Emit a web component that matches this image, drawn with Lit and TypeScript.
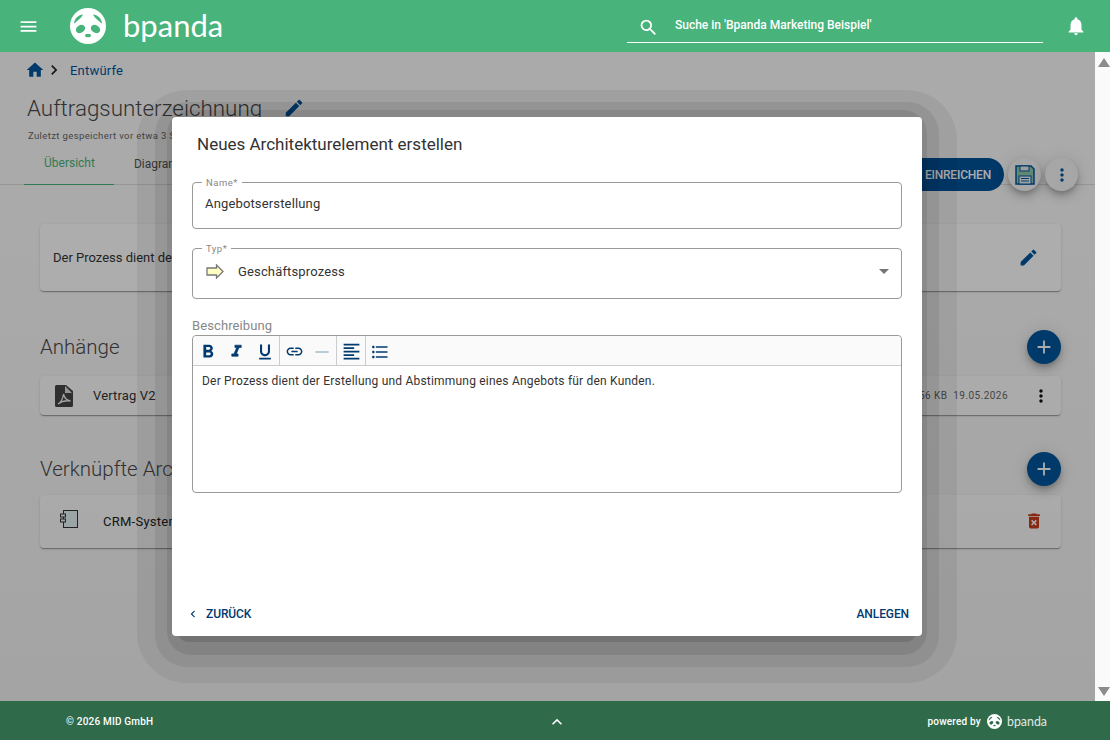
import { LitElement, css, html, svg } from "lit";
import { customElement } from "lit/decorators.js";

const icon = (d: string, size = 24, cls = "") => html`<svg class=${cls} width=${size} height=${size} viewBox="0 0 24 24" fill="currentColor"><path d=${d}></path></svg>`;

const MENU = "M3 18h18v-2H3v2zm0-5h18v-2H3v2zm0-7v2h18V6H3z";
const SEARCH = "M15.5 14h-.79l-.28-.27A6.47 6.47 0 0 0 16 9.5 6.5 6.5 0 1 0 9.5 16c1.61 0 3.09-.59 4.23-1.57l.27.28v.79l5 4.99L20.49 19l-4.99-5zm-6 0C7.01 14 5 11.99 5 9.5S7.01 5 9.5 5 14 7.01 14 9.5 11.99 14 9.5 14z";
const BELL = "M12 22c1.1 0 2-.9 2-2h-4c0 1.1.9 2 2 2zm6-6v-5c0-3.07-1.63-5.64-4.5-6.32V4c0-.83-.67-1.5-1.5-1.5s-1.5.67-1.5 1.5v.68C7.64 5.36 6 7.92 6 11v5l-2 2v1h16v-1l-2-2z";
const HOME = "M10 20v-6h4v6h5v-8h3L12 3 2 12h3v8z";
const CHEVRON = "M10 6 8.59 7.41 13.17 12l-4.58 4.59L10 18l6-6z";
const CHEVRON_L = "M15.41 7.41 14 6l-6 6 6 6 1.41-1.41L10.83 12z";
const UP = "M7.41 15.41 12 10.83l4.59 4.58L18 14l-6-6-6 6z";
const PENCIL = "M3 17.25V21h3.75L17.81 9.94l-3.75-3.75L3 17.25zM20.71 7.04a1 1 0 0 0 0-1.41l-2.34-2.34a1 1 0 0 0-1.41 0l-1.83 1.83 3.75 3.75 1.83-1.83z";
const DOTS = "M12 8c1.1 0 2-.9 2-2s-.9-2-2-2-2 .9-2 2 .9 2 2 2zm0 2c-1.1 0-2 .9-2 2s.9 2 2 2 2-.9 2-2-.9-2-2-2zm0 6c-1.1 0-2 .9-2 2s.9 2 2 2 2-.9 2-2-.9-2-2-2z";
const PLUS = "M19 13h-6v6h-2v-6H5v-2h6V5h2v6h6v2z";
const TRASH = "M6 19c0 1.1.9 2 2 2h8c1.1 0 2-.9 2-2V7H6v12zm2.46-7.12 1.41-1.41L12 12.59l2.12-2.12 1.41 1.41L13.41 14l2.12 2.12-1.41 1.41L12 15.41l-2.12 2.12-1.41-1.41L10.59 14l-2.13-2.12zM15.5 4l-1-1h-5l-1 1H5v2h14V4z";
const BOLD = "M15.6 10.79c.97-.67 1.65-1.77 1.65-2.79 0-2.26-1.75-4-4-4H7v14h7.04c2.09 0 3.71-1.7 3.71-3.79 0-1.52-.86-2.82-2.15-3.42zM10 6.5h3c.83 0 1.5.67 1.5 1.5s-.67 1.5-1.5 1.5h-3v-3zm3.5 9H10v-3h3.5c.83 0 1.5.67 1.5 1.5s-.67 1.5-1.5 1.5z";
const ITALIC = "M10 4v3h2.21l-3.42 8H6v3h8v-3h-2.21l3.42-8H18V4z";
const UNDERLINE = "M12 17c3.31 0 6-2.69 6-6V3h-2.5v8c0 1.93-1.57 3.5-3.5 3.5S8.5 12.93 8.5 11V3H6v8c0 3.31 2.69 6 6 6zm-7 2v2h14v-2H5z";
const LINK = "M3.9 12c0-1.71 1.39-3.1 3.1-3.1h4V7H7c-2.76 0-5 2.24-5 5s2.24 5 5 5h4v-1.9H7c-1.71 0-3.1-1.39-3.1-3.1zM8 13h8v-2H8v2zm9-6h-4v1.9h4c1.71 0 3.1 1.39 3.1 3.1s-1.39 3.1-3.1 3.1h-4V17h4c2.76 0 5-2.24 5-5s-2.24-5-5-5z";
const RULE = "M4 11h16v2H4z";
const ALIGN = "M15 15H3v2h12v-2zm0-8H3v2h12V7zM3 13h18v-2H3v2zm0 8h18v-2H3v2zM3 3v2h18V3H3z";
const LIST = "M4 10.5c-.83 0-1.5.67-1.5 1.5s.67 1.5 1.5 1.5 1.5-.67 1.5-1.5-.67-1.5-1.5-1.5zm0-6c-.83 0-1.5.67-1.5 1.5S3.17 7.5 4 7.5 5.5 6.83 5.5 6 4.83 4.5 4 4.5zm0 12c-.83 0-1.5.68-1.5 1.5s.68 1.5 1.5 1.5 1.5-.68 1.5-1.5-.67-1.5-1.5-1.5zM7 19h14v-2H7v2zm0-6h14v-2H7v2zm0-8v2h14V5H7z";

// the reference's dialog shadow shows as hard bands: [top, side, bottom, radius, alpha]
const SHADOW_BANDS = [
  [27, 35, 47, 50, 0.055],
  [15, 17, 31, 32, 0.07],
  [7, 5, 19, 24, 0.087],
  [-20, -6, 6, 10, 0.118],
];

const panda = (size: number, hole: string) => html`
  <svg width=${size} height=${size} viewBox="0 0 36 36">
    <circle cx="18" cy="18" r="18" fill="#fff"></circle>
    ${svg`
      <path d="M4 15.500C4 11 8.500 6.500 13 6.500 12 9 7 13.500 4 15.500z" fill=${hole}></path>
      <path d="M32 15.500C32 11 27.500 6.500 23 6.500 24 9 29 13.500 32 15.500z" fill=${hole}></path>
      <ellipse cx="10.500" cy="21" rx="5" ry="3.800" transform="rotate(-35 10.500 21)" fill=${hole}></ellipse>
      <ellipse cx="25.500" cy="21" rx="5" ry="3.800" transform="rotate(35 25.500 21)" fill=${hole}></ellipse>
      <ellipse cx="18" cy="27.500" rx="3" ry="1.800" fill=${hole}></ellipse>
    `}
  </svg>`;

@customElement("app-root")
export class AppRoot extends LitElement {
  static styles = css`
    :host {
      display: flex;
      flex-direction: column;
      height: 740px;
      overflow: hidden;
      font-family: Roboto, "Liberation Sans", sans-serif;
      color: #333;
      background: #fafafa;
    }
    svg { display: block; flex: none; }

    .topbar {
      height: 52px;
      flex: none;
      background: #48b37b;
      color: #fff;
      display: flex;
      align-items: center;
      padding: 0 23px 0 18px;
    }
    .logo { display: flex; align-items: center; gap: 17px; margin-left: 31px; }
    .wordmark { font-family: Lato, sans-serif; font-size: 31px; line-height: 36px; margin-top: -2px; }
    .search {
      margin-left: auto;
      align-self: flex-start;
      width: 416px;
      height: 43px;
      border-bottom: 1px solid #fff;
      display: flex;
      align-items: center;
      font-size: 12px;
      font-weight: 500;
      gap: 16px;
      padding: 8px 0 0 11px;
      box-sizing: border-box;
    }
    .search svg { margin-top: 4px; }
    .bell { margin-left: 22px; }

    .middle { flex: 1; display: flex; min-height: 0; position: relative; }
    .page { flex: 1; min-width: 0; position: relative; overflow: hidden; }
    .scrollbar {
      width: 15px;
      flex: none;
      background: #fafafa;
      display: flex;
      flex-direction: column;
      justify-content: space-between;
      padding: 6px 0 5px 3px;
      box-sizing: border-box;
    }
    .arrow-up { width: 0; border: 6px solid transparent; border-top: 0; border-bottom: 9px solid #8b8b8b; }
    .arrow-down { width: 0; border: 6px solid transparent; border-bottom: 0; border-top: 9px solid #8b8b8b; }

    .crumbs {
      display: flex;
      align-items: center;
      height: 20px;
      padding: 8px 0 0 25px;
      color: #0055a0;
      font-size: 13px;
    }
    .crumbs .sep { color: #222; margin: 0 2px 0 -1px; }
    .crumbs span { margin-left: 4px; letter-spacing: 0.2px; }
    .title-row { display: flex; align-items: center; margin: 12px 0 0 27px; height: 32px; gap: 21px; }
    h1 { margin: 0; font-size: 22.4px; font-weight: 300; color: #4a4a4a; }
    .title-row svg { color: #0055a0; }
    .saved { font-size: 9.5px; letter-spacing: 0.38px; color: #666; margin: 6px 0 0 28px; height: 12px; line-height: 12px; }

    .tabs-row {
      height: 43px;
      border-bottom: 1px solid #ddd;
      display: flex;
      position: relative;
      padding-left: 24px;
      box-sizing: border-box;
    }
    .tab { padding: 0 20px; height: 43px; font-size: 12px; display: flex; align-items: center; box-sizing: border-box; color: #555; }
    .tab.active { color: #48b37b; border-bottom: 1px solid #48b37b; padding-right: 19px; }
    .tab-actions {
      position: absolute;
      right: 17px;
      top: 16px;
      display: flex;
      align-items: center;
      gap: 4px;
      z-index: 1;
    }
    .submit {
      height: 33px;
      border-radius: 17px;
      background: #005299;
      color: #fff;
      font-size: 12px;
      font-weight: 500;
      letter-spacing: -0.2px;
      padding: 0 13px 0 40px;
      display: flex;
      align-items: center;
    }
    .round {
      width: 33px;
      height: 33px;
      border-radius: 50%;
      background: #f5f5f5;
      color: #0055a0;
      display: flex;
      align-items: center;
      justify-content: center;
      box-shadow: 0 3px 5px -1px rgba(0,0,0,.2), 0 6px 10px 0 rgba(0,0,0,.14), 0 1px 18px 0 rgba(0,0,0,.12);
    }

    .content { padding: 39px 34px 0 40px; }
    .card {
      background: #fff;
      border-radius: 4px;
      box-shadow: 0 2px 1px -1px rgba(0,0,0,.2), 0 1px 1px 0 rgba(0,0,0,.14), 0 1px 3px 0 rgba(0,0,0,.12);
      display: flex;
      align-items: center;
      font-size: 13px;
    }
    .desc { height: 67px; padding: 0 22px 0 13px; justify-content: space-between; }
    .desc svg { color: #0055a0; }
    .section-head { display: flex; align-items: center; justify-content: space-between; height: 34px; }
    .section-head h2 { margin: 0; font-size: 20.5px; font-weight: 300; color: #4a4a4a; }
    .fab {
      width: 34px;
      height: 34px;
      border-radius: 50%;
      background: #00569f;
      color: #fff;
      display: flex;
      align-items: center;
      justify-content: center;
      box-shadow: 0 3px 5px -1px rgba(0,0,0,.2), 0 6px 10px 0 rgba(0,0,0,.14), 0 1px 18px 0 rgba(0,0,0,.12);
    }
    .attach { height: 39px; padding-left: 15px; margin-top: 12px; }
    .attach .name { margin-left: 20px; letter-spacing: 0.15px; flex: 1; }
    .attach .meta { font-size: 10px; letter-spacing: 0.45px; color: #666; margin-right: 23px; }
    .attach .menu { margin-right: 10px; color: #111; }
    .linked { height: 53px; padding-left: 20px; margin-top: 9px; }
    .linked .comp { margin-top: -6px; }
    .linked .name { margin-left: 25px; letter-spacing: 0.25px; flex: 1; color: #222; }
    .linked .del { color: #cb3e18; margin: -1px 17px 0 0; }
    .s1 { margin-top: 39px; }
    .s2 { margin-top: 37px; }

    .scrim {
      position: absolute;
      inset: 0;
      background: linear-gradient(rgba(0,0,0,.32) 30%, rgba(0,0,0,.345));
      z-index: 2;
    }
    .dialog-wrap {
      position: absolute;
      left: 172px;
      top: 65px;
      width: 750px;
      height: 519px;
      z-index: 3;
    }
    .band { position: absolute; }
    .dialog {
      position: relative;
      height: 100%;
      background: #fff;
      border-radius: 4px;
      box-sizing: border-box;
      padding: 0 20px;
      display: flex;
      flex-direction: column;
    }
    .dialog h3 { margin: 17px 0 0 5px; font-size: 17px; font-weight: 400; line-height: 20px; color: #333; }
    .field {
      position: relative;
      border: 1px solid #999;
      border-radius: 4px;
      display: flex;
      align-items: center;
      padding: 0 12px;
      font-size: 13px;
      letter-spacing: 0.15px;
      color: #333;
      box-sizing: border-box;
    }
    .field label {
      position: absolute;
      left: 9px;
      top: -6px;
      padding: 0 4px;
      background: #fff;
      font-size: 9.5px;
      line-height: 11px;
      letter-spacing: 0.5px;
      color: #888;
    }
    .name-field { height: 47px; margin-top: 28px; padding-bottom: 5px; }
    .type-field { height: 51px; margin-top: 19px; padding-bottom: 4px; gap: 14px; }
    .type-field .arrow { margin-left: 1px; }
    .type-field .caret { margin-left: auto; width: 0; height: 0; border: 5px solid transparent; border-top-color: #757575; border-bottom: 0; }
    .editor-label { font-size: 13px; color: #888; margin-top: 20px; line-height: 14px; letter-spacing: 0.1px; }
    .editor { height: 158px; margin-top: 2px; border: 1px solid #999; border-radius: 4px; box-sizing: border-box; display: flex; flex-direction: column; }
    .toolbar { height: 30px; flex: none; display: flex; align-items: center; border-bottom: 1px solid #ccc; background: #fafafa; color: #003a70; box-sizing: border-box; border-radius: 4px 4px 0 0; }
    .group { display: flex; height: 100%; align-items: center; border-right: 1px solid #ccc; padding-top: 2px; box-sizing: border-box; }
    .group:first-child { padding-left: 2px; }
    .group:last-child { border-right: 0; }
    .tool { width: 28px; height: 24px; display: flex; align-items: center; justify-content: center; }
    .tool.off { color: #b0c4d4; }
    .tool.bold svg { margin-left: -3px; }
    .tool.heavy svg { margin-left: -2px; }
    .tool.heavy svg path { stroke: currentColor; stroke-width: 0.8px; }
    .editor-body { font-size: 12px; letter-spacing: 0.2px; padding: 8px 9px; color: #333; line-height: 14px; }
    .actions {
      margin: auto -7px 0 -6px;
      height: 44px;
      display: flex;
      justify-content: space-between;
      align-items: center;
      box-sizing: border-box;
      color: #003a70;
      font-size: 12px;
      font-weight: 500;
      letter-spacing: -0.1px;
    }
    .back { display: flex; align-items: center; gap: 6px; }

    .footer {
      height: 39px;
      flex: none;
      background: #2f6b4b;
      color: #fff;
      display: grid;
      grid-template-columns: 1fr auto 1fr;
      align-items: center;
      padding: 2px 63px 0 66px;
      box-sizing: border-box;
      font-size: 10px;
      font-weight: 500;
      letter-spacing: 0.2px;
    }
    .powered { display: flex; align-items: center; justify-content: flex-end; gap: 6px; }
    .powered b { font-family: Lato, sans-serif; font-weight: 400; font-size: 12.4px; opacity: .85; letter-spacing: 0; margin-left: -1px; }
  `;

  render() {
    return html`
      <div class="topbar">
        ${icon(MENU, 21)}
        <div class="logo">${panda(36, "#48b37b")}<span class="wordmark">bpanda</span></div>
        <div class="search">${icon(SEARCH, 21)}<span>Suche in 'Bpanda Marketing Beispiel'</span></div>
        ${icon(BELL, 22, "bell")}
      </div>

      <div class="middle">
        <div class="page">
          <div class="crumbs">
            ${icon(HOME, 20)}
            ${icon(CHEVRON, 20, "sep")}
            <span>Entwürfe</span>
          </div>
          <div class="title-row">
            <h1>Auftragsunterzeichnung</h1>
            ${icon(PENCIL, 22)}
          </div>
          <div class="saved">Zuletzt gespeichert vor etwa 3 Stunden</div>
          <div class="tabs-row">
            <div class="tab active">Übersicht</div>
            <div class="tab">Diagramm</div>
            <div class="tab-actions">
              <div class="submit">EINREICHEN</div>
              <div class="round">
                <svg width="24" height="24" viewBox="0 0 24 24">
                  <path d="M3 3h15l3 3v15H3z" fill="#8fc8a8" stroke="#00559d" stroke-width="1.5"></path>
                  <rect x="7" y="3" width="9" height="5" fill="#e8e8e8" stroke="#00559d"></rect>
                  <rect x="6" y="13" width="12" height="8" fill="#e8f0f4" stroke="#00559d"></rect>
                  <path d="M8 15.500h8M8 18h8" stroke="#00559d"></path>
                </svg>
              </div>
              <div class="round">${icon(DOTS, 20)}</div>
            </div>
          </div>

          <div class="content">
            <div class="card desc">
              <span>Der Prozess dient der Erstellung und Abstimmung eines Angebots für den Kunden.</span>
              ${icon(PENCIL, 21)}
            </div>

            <div class="section-head s1"><h2>Anhänge</h2><div class="fab">${icon(PLUS, 22)}</div></div>
            <div class="card attach">
              <svg width="18" height="22" viewBox="0 0 18 22">
                <path d="M1.500 0H11l7 6v14.500a1.500 1.500 0 0 1-1.500 1.500h-15A1.500 1.500 0 0 1 0 20.500v-19A1.500 1.500 0 0 1 1.500 0z" fill="#454545"></path>
                <path d="M10 1v7h7z" fill="#ddd"></path>
                <path d="M3 19c2.500-1.500 5-6 5.500-10 .8 4 3.500 6.500 7 7-4-.6-9 .3-12.500 3z" fill="none" stroke="#eee" stroke-width="1.3"></path>
              </svg>
              <span class="name">Vertrag V2</span>
              <span class="meta">56 KB&nbsp; 19.05.2026</span>
              ${icon(DOTS, 20, "menu")}
            </div>

            <div class="section-head s2"><h2>Verknüpfte Architekturelemente</h2><div class="fab">${icon(PLUS, 22)}</div></div>
            <div class="card linked">
              <svg class="comp" width="18" height="18" viewBox="0 0 18 18">
                <rect x="3.5" y=".5" width="14" height="17" fill="#eaf8f8" stroke="#333"></rect>
                <rect x=".5" y="4" width="5" height="3" fill="#eaf8f8" stroke="#333"></rect>
                <rect x=".5" y="9" width="5" height="3" fill="#eaf8f8" stroke="#333"></rect>
              </svg>
              <span class="name">CRM-System</span>
              ${icon(TRASH, 20, "del")}
            </div>
          </div>

          <div class="scrim"></div>
          <div class="dialog-wrap">
            ${SHADOW_BANDS.map(([top, side, bottom, radius, alpha]) => html`
              <div class="band" style="inset:${-top}px ${-side}px ${-bottom}px;border-radius:${radius}px;background:rgba(0,0,0,${alpha})"></div>
            `)}
            <div class="dialog">
              <h3>Neues Architekturelement erstellen</h3>
              <div class="field name-field"><label>Name*</label>Angebotserstellung</div>
              <div class="field type-field">
                <label>Typ*</label>
                <svg class="arrow" width="18" height="15" viewBox="0 0 18 15">
                  <path d="M1 4h9.500V1L17 7.500 10.500 14v-3H1z" fill="#ffffc4" stroke="#777" stroke-width="1.300"></path>
                </svg>
                <span>Geschäftsprozess</span>
                <span class="caret"></span>
              </div>
              <div class="editor-label">Beschreibung</div>
              <div class="editor">
                <div class="toolbar">
                  <div class="group">
                    <span class="tool bold">${icon(BOLD, 22)}</span>
                    <span class="tool heavy">${icon(ITALIC, 19)}</span>
                    <span class="tool">${icon(UNDERLINE, 20)}</span>
                  </div>
                  <div class="group">
                    <span class="tool">${icon(LINK, 19)}</span>
                    <span class="tool off">${icon(RULE, 20)}</span>
                  </div>
                  <div class="group">
                    <span class="tool">${icon(ALIGN, 21)}</span>
                  </div>
                  <div class="group">
                    <span class="tool">${icon(LIST, 20)}</span>
                  </div>
                </div>
                <div class="editor-body">Der Prozess dient der Erstellung und Abstimmung eines Angebots für den Kunden.</div>
              </div>
              <div class="actions">
                <span class="back">${icon(CHEVRON_L, 14)}ZURÜCK</span>
                <span>ANLEGEN</span>
              </div>
            </div>
          </div>
        </div>
        <div class="scrollbar"><span class="arrow-up"></span><span class="arrow-down"></span></div>
      </div>

      <div class="footer">
        <span>© 2026 MID GmbH</span>
        ${icon(UP, 20)}
        <span class="powered">powered by ${panda(15, "#2f6b4b")}<b>bpanda</b></span>
      </div>
    `;
  }
}
